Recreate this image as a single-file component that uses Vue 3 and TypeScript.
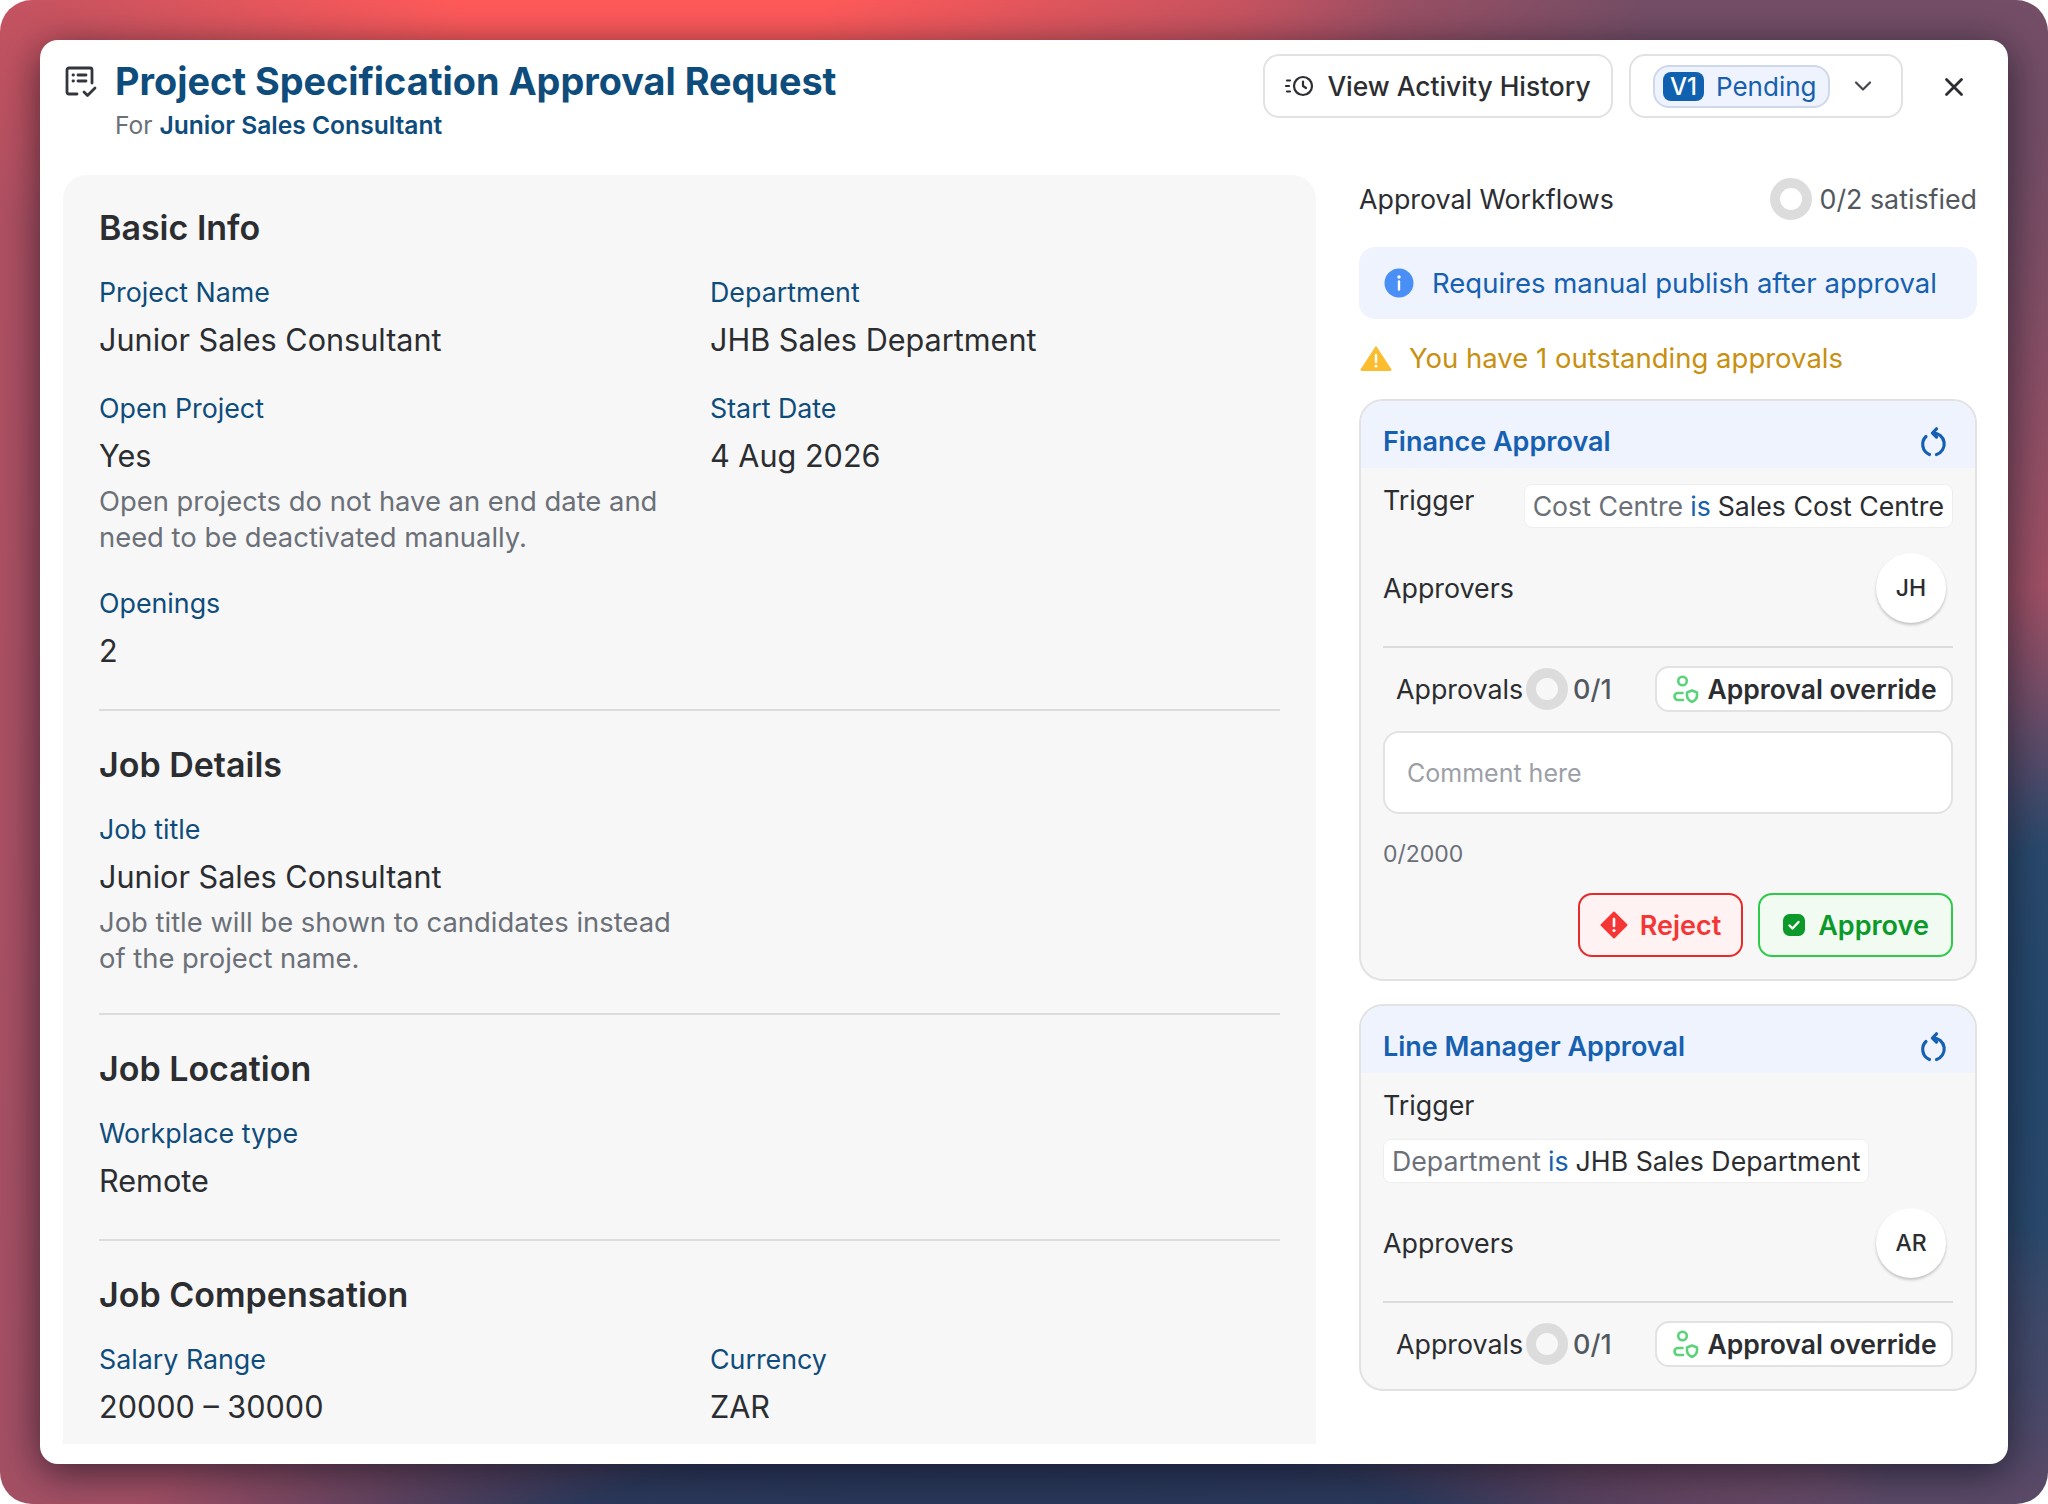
<script setup lang="ts">
interface Field {
  label: string;
  value: string;
  help?: string[];
}

interface Section {
  title: string;
  rows: Field[];
}

interface Workflow {
  title: string;
  subject: string;
  target: string;
  initials: string;
  stacked: boolean;
  active: boolean;
}

const sections: Section[] = [
  {
    title: 'Basic Info',
    rows: [
      { label: 'Project Name', value: 'Junior Sales Consultant' },
      { label: 'Department', value: 'JHB Sales Department' },
      {
        label: 'Open Project',
        value: 'Yes',
        help: ['Open projects do not have an end date and', 'need to be deactivated manually.']
      },
      { label: 'Start Date', value: '4 Aug 2026' },
      { label: 'Openings', value: '2' }
    ]
  },
  {
    title: 'Job Details',
    rows: [
      {
        label: 'Job title',
        value: 'Junior Sales Consultant',
        help: ['Job title will be shown to candidates instead', 'of the project name.']
      }
    ]
  },
  {
    title: 'Job Location',
    rows: [{ label: 'Workplace type', value: 'Remote' }]
  },
  {
    title: 'Job Compensation',
    rows: [
      { label: 'Salary Range', value: '20000 – 30000' },
      { label: 'Currency', value: 'ZAR' }
    ]
  }
];

const workflows: Workflow[] = [
  {
    title: 'Finance Approval',
    subject: 'Cost Centre',
    target: 'Sales Cost Centre',
    initials: 'JH',
    stacked: false,
    active: true
  },
  {
    title: 'Line Manager Approval',
    subject: 'Department',
    target: 'JHB Sales Department',
    initials: 'AR',
    stacked: true,
    active: false
  }
];
</script>

<template>
  <div class="frame">
    <div class="modal">
      <header class="top">
        <div class="heading">
          <svg class="doc-icon" width="32" height="32" viewBox="0 0 32 32" fill="none" stroke="#33373d" stroke-width="2.8" stroke-linecap="round" stroke-linejoin="round">
            <path d="M12 28H4a2 2 0 0 1-2-2V4a2 2 0 0 1 2-2h21a2 2 0 0 1 2 2v13" />
            <path d="M8 9h.5M13 9h8M8 15h.5M13 15h8" />
            <path d="M19 26l3.500 3.500L30 22" />
          </svg>
          <div>
            <h1>Project Specification Approval Request</h1>
            <p class="for">For <b>Junior Sales Consultant</b></p>
          </div>
        </div>
        <div class="actions">
          <button class="history">
            <svg width="30" height="24" viewBox="0 0 30 24" fill="none" stroke="#2b2d31" stroke-width="2.2" stroke-linecap="round" stroke-linejoin="round">
              <circle cx="18" cy="12" r="9" />
              <path d="M18 7.500V12l3 2" />
              <path d="M2 6.500h3M1 12h3M2 17.500h3" />
            </svg>
            View Activity History
          </button>
          <div class="status">
            <span class="status-pill"><span class="version">V1</span>Pending</span>
            <svg width="18" height="12" viewBox="0 0 18 12" fill="none" stroke="#44484e" stroke-width="2.200" stroke-linecap="round" stroke-linejoin="round">
              <path d="M2 2.500l7 7 7-7" />
            </svg>
          </div>
          <svg class="close" width="20" height="20" viewBox="0 0 20 20" fill="none" stroke="#2b2d31" stroke-width="2.800" stroke-linecap="round">
            <path d="M2.500 2.500l15 15M17.500 2.500l-15 15" />
          </svg>
        </div>
      </header>

      <div class="body">
        <main class="details">
          <section v-for="section in sections" :key="section.title" class="section">
            <h2>{{ section.title }}</h2>
            <div class="grid">
              <div v-for="row in section.rows" :key="row.label" class="field">
                <div class="label">{{ row.label }}</div>
                <div class="value">{{ row.value }}</div>
                <p v-if="row.help" class="help">
                  <span v-for="line in row.help" :key="line">{{ line }}</span>
                </p>
              </div>
            </div>
          </section>
        </main>

        <aside class="side">
          <div class="side-head">
            <span>Approval Workflows</span>
            <span class="count"><i class="ring"></i>0/2 satisfied</span>
          </div>
          <div class="info">
            <svg width="30" height="30" viewBox="0 0 30 30">
              <circle cx="15" cy="15" r="14.500" fill="#4a8ff5" />
              <path d="M15 13.500v8" stroke="#fff" stroke-width="2.400" stroke-linecap="round" />
              <circle cx="15" cy="9" r="1.700" fill="#fff" />
            </svg>
            Requires manual publish after approval
          </div>
          <div class="warn">
            <svg width="32" height="26" viewBox="0 0 32 26">
              <path d="M16 1.500L31 24.500a.6.6 0 0 1-.5 1H1.500a.6.6 0 0 1-.5-1z" fill="#fbbd2d" stroke="#fbbd2d" stroke-linejoin="round" />
              <path d="M16 10v7" stroke="#fff" stroke-width="2.400" stroke-linecap="round" />
              <circle cx="16" cy="21" r="1.500" fill="#fff" />
            </svg>
            You have 1 outstanding approvals
          </div>

          <article v-for="flow in workflows" :key="flow.title" class="card">
            <div class="card-head">
              <span>{{ flow.title }}</span>
              <svg width="28" height="30" viewBox="0 0 28 30" fill="none" stroke="#1560b0" stroke-width="3.200" stroke-linecap="round" stroke-linejoin="round">
                <path d="M7 9.500a11 11 0 0 0 3.500 18" />
                <path d="M17.500 27.500A11 11 0 0 0 14 6" />
                <path d="M17.500 1.800L13.500 6l4 4" />
              </svg>
            </div>
            <div class="card-body">
              <div class="trigger" :class="{ stacked: flow.stacked }">
                <span class="row-name">Trigger</span>
                <span class="rule">
                  <span class="subject">{{ flow.subject }}</span>
                  <span class="is">is</span>
                  <span>{{ flow.target }}</span>
                </span>
              </div>
              <div class="approvers">
                <span class="row-name">Approvers</span>
                <span class="avatar">{{ flow.initials }}</span>
              </div>
              <div class="approvals">
                <span class="row-name">Approvals</span>
                <i class="ring big"></i>
                <span class="ratio">0/1</span>
                <button class="override">
                  <svg width="28" height="28" viewBox="0 0 28 28" fill="none" stroke="#5bd37a" stroke-width="2.600" stroke-linecap="round" stroke-linejoin="round">
                    <circle cx="11.500" cy="6" r="4.300" />
                    <path d="M11.500 18H7a3.500 3.500 0 0 0 0 7h5" />
                    <path d="M21 15.500l5 2v3c0 3-2 5-5 6.500-3-1.500-5-3.500-5-6.500v-3z" />
                  </svg>
                  Approval override
                </button>
              </div>
              <template v-if="flow.active">
                <input class="comment" type="text" placeholder="Comment here" />
                <div class="counter">0/2000</div>
                <div class="decide">
                  <button class="reject">
                    <svg width="28" height="28" viewBox="0 0 28 28">
                      <path d="M14 1.500L26.500 14 14 26.500 1.500 14z" fill="#f43636" stroke="#f43636" stroke-width="2" stroke-linejoin="round" />
                      <path d="M14 8v7" stroke="#fff" stroke-width="2.600" stroke-linecap="round" />
                      <circle cx="14" cy="19.500" r="1.600" fill="#fff" />
                    </svg>
                    Reject
                  </button>
                  <button class="approve">
                    <svg width="24" height="24" viewBox="0 0 24 24">
                      <rect x="1" y="1" width="22" height="22" rx="6.500" fill="#0b9a2a" />
                      <path d="M7.500 12.500l3 3 6-6.500" fill="none" stroke="#fff" stroke-width="2.400" stroke-linecap="round" stroke-linejoin="round" />
                    </svg>
                    Approve
                  </button>
                </div>
              </template>
            </div>
          </article>
        </aside>
      </div>
    </div>
  </div>
</template>

<style scoped>
.frame {
  width: 2048px;
  height: 1504px;
  box-sizing: border-box;
  padding: 40px;
  border-radius: 32px;
  overflow: hidden;
  display: flex;
  font-family: Inter, "Noto Sans", sans-serif;
  color: #2b2d31;
  background:
    radial-gradient(ellipse 760px 420px at 640px -20px, #ff5a5a 0%, #ff5a5a 25%, rgba(255, 90, 90, 0) 100%),
    radial-gradient(ellipse 540px 460px at 2130px 1040px, #24486e 0%, #2a4a6d 45%, rgba(42, 74, 109, 0) 100%),
    radial-gradient(ellipse 900px 260px at 1000px 1580px, #26365a 0%, #2d3a5c 55%, rgba(45, 58, 92, 0) 100%),
    radial-gradient(ellipse 520px 420px at 2080px 1540px, #5b4a68 0%, #5b4a68 40%, rgba(91, 74, 104, 0) 100%),
    radial-gradient(ellipse 620px 760px at 1860px -20px, #744e66 0%, #744e66 35%, rgba(116, 78, 102, 0) 100%),
    linear-gradient(180deg, #b25163 0%, #a45065 100%);
}

.modal {
  flex: 1;
  min-width: 0;
  display: flex;
  flex-direction: column;
  background: #fff;
  border-radius: 18px;
  box-shadow: 0 8px 40px rgba(10, 14, 28, 0.68);
}

.top {
  height: 135px;
  flex: none;
  display: flex;
  justify-content: space-between;
  padding: 14px 44px 0 25px;
  box-sizing: border-box;
}

.heading {
  display: flex;
  gap: 18px;
}

.doc-icon {
  margin-top: 12px;
}

h1 {
  margin: 0;
  height: 56px;
  font-size: 37.800px;
  line-height: 54px;
  font-weight: 700;
  color: #0e4c7c;
}

.for {
  margin: 0;
  font-size: 24.600px;
  line-height: 31px;
  color: #6b7078;
}

.for b {
  font-weight: 600;
  color: #0e4c7c;
}

.actions {
  display: flex;
  align-items: flex-start;
}

button {
  font-family: inherit;
  cursor: pointer;
}

.history {
  width: 350px;
  height: 64px;
  display: flex;
  align-items: center;
  justify-content: center;
  gap: 12px;
  background: #fff;
  border: 2px solid #e2e2e2;
  border-radius: 16px;
  font-size: 26.400px;
  font-weight: 500;
  color: #2b2d31;
}

.status {
  width: 274px;
  height: 64px;
  box-sizing: border-box;
  margin-left: 16px;
  display: flex;
  align-items: center;
  gap: 24px;
  padding-left: 22px;
  border: 2px solid #e2e2e2;
  border-radius: 16px;
}

.status-pill {
  width: 177px;
  height: 43px;
  box-sizing: border-box;
  display: flex;
  align-items: center;
  gap: 12px;
  padding-left: 8px;
  background: #eff3fe;
  border: 2px solid #cfd8ea;
  border-radius: 16px;
  font-size: 26px;
  color: #1560b0;
}

.version {
  width: 41px;
  height: 29px;
  display: flex;
  align-items: center;
  justify-content: center;
  background: #1061b0;
  border-radius: 8px;
  color: #fff;
  font-size: 24px;
  font-weight: 500;
}

.close {
  margin: 23px 0 0 41px;
}

.body {
  flex: 1;
  min-height: 0;
  display: flex;
  gap: 43px;
  padding: 0 31px 20px 23px;
}

.details {
  width: 1253px;
  flex: none;
  box-sizing: border-box;
  padding: 29px 36px 0;
  background: #f7f7f7;
  border-radius: 24px 24px 0 0;
  overflow: hidden;
}

.section {
  padding-bottom: 35.500px;
  margin-bottom: 30px;
  border-bottom: 2px solid #dcdcdc;
}

.section:last-child {
  border-bottom: 0;
  margin-bottom: 0;
}

h2 {
  margin: 0 0 22px;
  font-size: 34px;
  line-height: 48px;
  font-weight: 600;
  color: #2b2d31;
}

.grid {
  display: grid;
  grid-template-columns: 569px 569px;
  column-gap: 42px;
  row-gap: 28px;
}

.label {
  font-size: 26.800px;
  line-height: 36px;
  color: #0e4c7c;
}

.value {
  margin-top: 8px;
  font-size: 30.600px;
  line-height: 44px;
  color: #2b2d31;
}

.help {
  margin: 5px 0 2px;
  font-size: 27.400px;
  line-height: 36px;
  color: #6b7078;
}

.help span {
  display: block;
  white-space: nowrap;
}

.side {
  flex: 1;
  min-width: 0;
  display: flex;
  flex-direction: column;
}

.side-head {
  height: 48px;
  margin-bottom: 24px;
  display: flex;
  align-items: center;
  justify-content: space-between;
  font-size: 26.800px;
  color: #2b2d31;
}

.count {
  display: flex;
  align-items: center;
  gap: 8px;
  color: #53575e;
}

.ring {
  display: block;
  width: 42px;
  height: 42px;
  box-sizing: border-box;
  border: 10px solid #dcdcdc;
  border-radius: 50%;
}

.info {
  height: 72px;
  display: flex;
  align-items: center;
  gap: 18px;
  padding-left: 25px;
  background: #eff3fe;
  border-radius: 16px;
  font-size: 27.500px;
  color: #1560b0;
}

.warn {
  height: 78px;
  padding: 0 0 2px 1px;
  display: flex;
  align-items: center;
  gap: 17px;
  font-size: 27.500px;
  color: #c8900f;
}

.card {
  margin-bottom: 23px;
  background: #f7f7f7;
  border: 2px solid #e2e2e2;
  border-radius: 24px;
  overflow: hidden;
}

.card-head {
  height: 67px;
  box-sizing: border-box;
  display: flex;
  align-items: center;
  justify-content: space-between;
  padding: 14px 28px 0 22px;
  background: #eff3fe;
  font-size: 27px;
  font-weight: 600;
  color: #1560b0;
}

.card-body {
  padding: 15px 22px 22px;
}

.row-name {
  font-size: 26.800px;
  line-height: 34px;
  color: #2b2d31;
}

.trigger {
  display: flex;
  justify-content: space-between;
  align-items: flex-start;
}

.trigger.stacked {
  flex-direction: column;
  gap: 16px;
}

.rule {
  height: 44px;
  box-sizing: border-box;
  margin-top: 1px;
  display: flex;
  align-items: center;
  gap: 7px;
  padding: 0 8px;
  background: #fff;
  border: 1px solid #eeeeee;
  border-radius: 8px;
  font-size: 26.700px;
  color: #2b2d31;
}

.subject {
  color: #6b7078;
}

.is {
  color: #1560b0;
}

.approvers {
  height: 70px;
  margin-top: 25px;
  display: flex;
  align-items: center;
  justify-content: space-between;
  padding-right: 7px;
}

.avatar {
  width: 70px;
  height: 70px;
  display: flex;
  align-items: center;
  justify-content: center;
  background: #fff;
  border-radius: 50%;
  box-shadow: 0 2px 3px rgba(0, 0, 0, 0.22);
  font-size: 23px;
  font-weight: 500;
}

.approvals {
  margin-top: 23px;
  padding: 18px 0 0 13px;
  border-top: 2px solid #dcdcdc;
  display: flex;
  align-items: center;
}

.ring.big {
  margin-left: 3px;
}

.ratio {
  margin-left: 5px;
  font-size: 27px;
  font-weight: 500;
  color: #53575e;
}

.override {
  width: 298px;
  height: 46px;
  margin-left: auto;
  display: flex;
  align-items: center;
  justify-content: center;
  gap: 8px;
  padding: 0;
  background: #fff;
  border: 2px solid #e2e2e2;
  border-radius: 14px;
  font-size: 26.500px;
  font-weight: 600;
  color: #2b2d31;
}

.comment {
  display: block;
  width: 100%;
  height: 83px;
  box-sizing: border-box;
  margin-top: 19px;
  padding: 0 22px;
  background: #fff;
  border: 2px solid #e2e2e2;
  border-radius: 16px;
  font-family: inherit;
  font-size: 25px;
  outline: none;
}

.comment::placeholder {
  color: #9ca0a6;
  opacity: 1;
}

.counter {
  margin-top: 24px;
  font-size: 23px;
  line-height: 32px;
  color: #6b7078;
}

.decide {
  margin-top: 23px;
  display: flex;
  justify-content: flex-end;
  gap: 15px;
}

.decide button {
  height: 64px;
  display: flex;
  align-items: center;
  justify-content: center;
  gap: 12px;
  padding: 0;
  border-radius: 14px;
  font-size: 27px;
  font-weight: 600;
}

.reject {
  width: 165px;
  background: #fff2f2;
  border: 2px solid #e52b2b;
  color: #f43636;
}

.approve {
  width: 195px;
  background: #f1fbf1;
  border: 2px solid #2ecb4a;
  color: #0b9a2a;
}
</style>

<style>
html,
body {
  margin: 0;
  background: #fff;
}
</style>
